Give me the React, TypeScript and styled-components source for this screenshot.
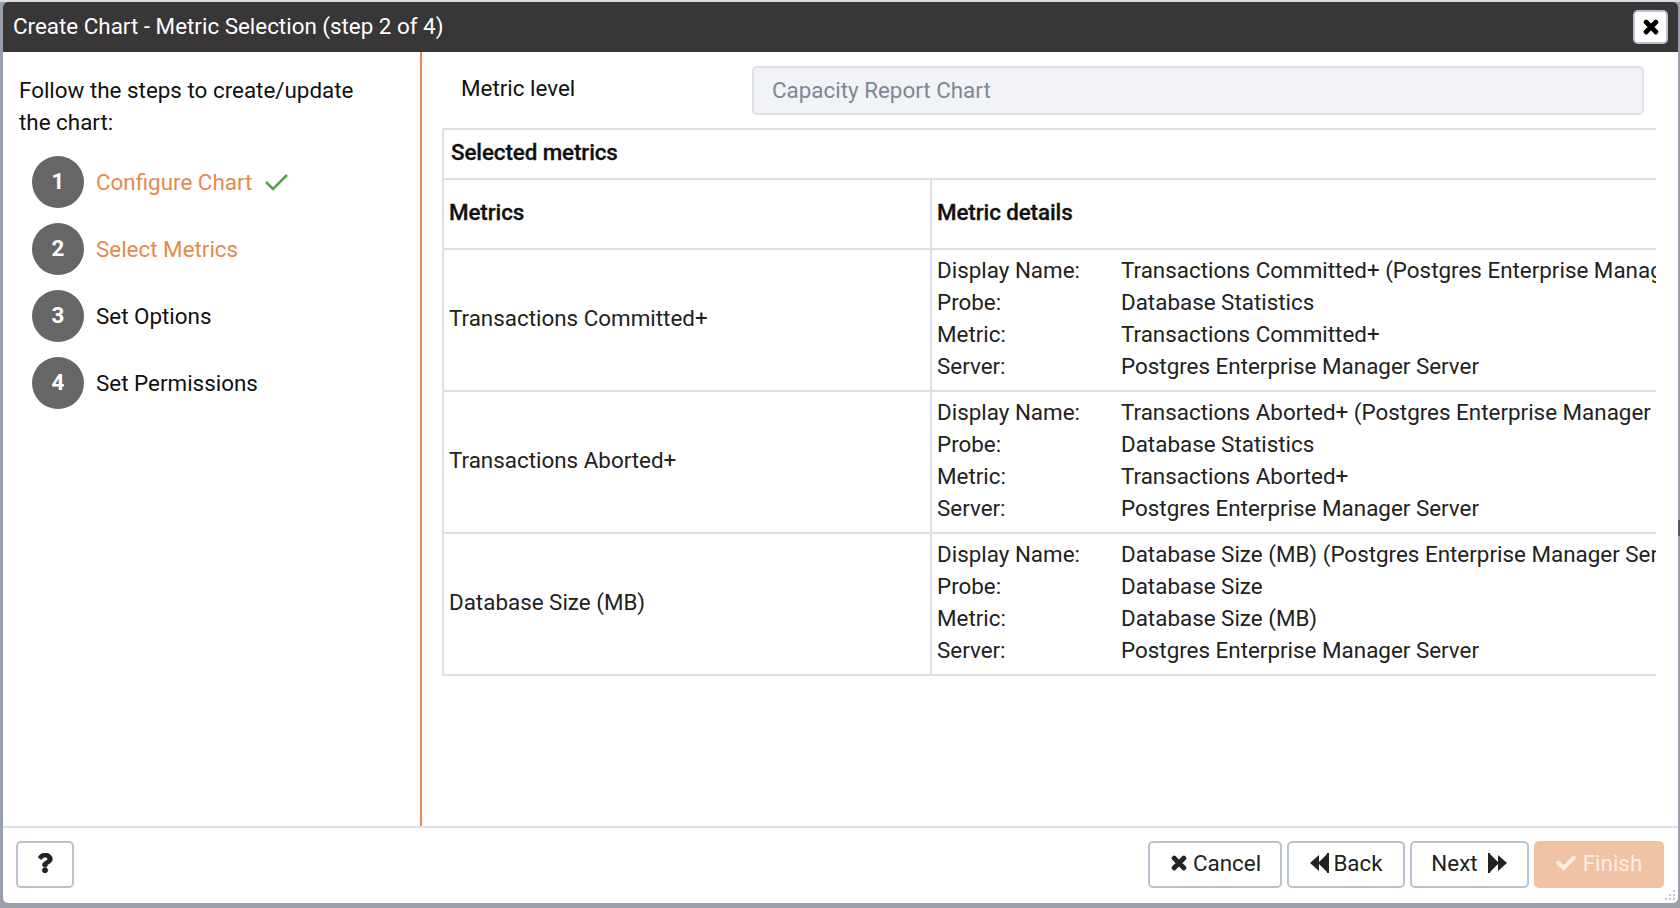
import React from "react";
import styled, { createGlobalStyle } from "styled-components";
import { FaTimes, FaCheck, FaQuestion } from "react-icons/fa";

const Orange = "#e58a4e";
const Line = "#dde0e6";
const BtnLine = "#bac1cf";
const Ink = "#222222";

const GlobalStyle = createGlobalStyle`
  html, body {
    margin: 0;
    height: 100%;
    overflow: hidden;
    background: #9a9fae;
  }
  body {
    font-family: Roboto, "Liberation Sans", sans-serif;
    font-size: 22.4px;
    line-height: 32px;
    color: ${Ink};
  }
`;

const Page = styled.div`
  position: relative;
  height: 908px;
  padding: 2px 2px 5px 3px;
  box-sizing: border-box;
  background: linear-gradient(#d9dbe0 0, #d9dbe0 2px, #9a9fae 2px);
`;

const EdgeMark = styled.div`
  position: absolute;
  top: 520px;
  right: 0;
  width: 2px;
  height: 16px;
  background: #555b66;
`;

const Dialog = styled.div`
  position: relative;
  height: 100%;
  display: flex;
  flex-direction: column;
  background: #fff;
  border-radius: 5px;
  overflow: hidden;
`;

const TitleBar = styled.div`
  height: 50px;
  flex: none;
  display: flex;
  align-items: center;
  justify-content: space-between;
  padding: 0 10px;
  background: #383637;
  color: #fff;
`;

const Title = styled.div`
  padding-bottom: 2px;
`;

const CloseButton = styled.button`
  width: 35px;
  height: 34px;
  padding: 0;
  display: flex;
  align-items: center;
  justify-content: center;
  background: #fff;
  border: 2px solid ${BtnLine};
  border-radius: 5px;
  color: #000;
  font-size: 20px;

  svg {
    stroke: currentColor;
    stroke-width: 30;
  }
`;

const Body = styled.div`
  flex: 1;
  min-height: 0;
  display: flex;
`;

const Sidebar = styled.div`
  width: 419px;
  flex: none;
  box-sizing: border-box;
  padding: 22px 16px 0 16px;
  border-right: 2px solid ${Orange};
  color: #111;
`;

const Intro = styled.div`
  width: 350px;
`;

const Steps = styled.ol`
  list-style: none;
  margin: 18px 0 0;
  padding: 0 0 0 13px;
  display: flex;
  flex-direction: column;
  gap: 15px;
`;

const Step = styled.li<{ $done: boolean }>`
  display: flex;
  align-items: center;
  gap: 12px;
  height: 52px;
  color: ${(p) => (p.$done ? Orange : "#111")};
`;

const Bullet = styled.span`
  width: 52px;
  height: 100%;
  flex: none;
  display: flex;
  align-items: center;
  justify-content: center;
  padding-bottom: 3px;
  box-sizing: border-box;
  border-radius: 50%;
  background: #666666;
  color: #fff;
  font-weight: 700;
`;

const DoneMark = styled.svg`
  width: 26px;
  height: 26px;
  fill: none;
  stroke: #55a255;
  stroke-width: 2.6;
`;

const Content = styled.div`
  flex: 1;
  min-width: 0;
  padding: 14px 20px 0 20px;
`;

const LevelRow = styled.div`
  display: flex;
  align-items: flex-start;
  height: 49px;
  padding-right: 14px;
  margin-bottom: 13px;
`;

const LevelLabel = styled.label`
  width: 310px;
  flex: none;
  padding: 6px 0 0 19px;
  box-sizing: border-box;
  color: #111;
`;

const LevelInput = styled.div`
  flex: 1;
  height: 49px;
  box-sizing: border-box;
  padding: 6px 18px;
  background: #f2f3f7;
  border: 2px solid ${Line};
  border-radius: 5px;
  color: #7f8796;
`;

const TableClip = styled.div`
  overflow: hidden;
  margin-right: 2px;
`;

const Table = styled.table`
  width: 1300px;
  table-layout: fixed;
  border-collapse: collapse;
  border: 2px solid ${Line};
  border-right: none;
`;

const MetricsCol = styled.col`
  width: 488px;
`;

const CaptionCell = styled.th`
  height: 50px;
  padding: 0 7px 4px;
  box-sizing: border-box;
  text-align: left;
  font-weight: 500;
  font-size: 22.4px;
  letter-spacing: -0.1px;
  color: #111;
  -webkit-text-stroke: 0.3px #111;
  border-bottom: 2px solid ${Line};
`;

const HeadCell = styled.th<{ $wide?: boolean }>`
  height: 70px;
  padding: 0 5px 5px;
  box-sizing: border-box;
  text-align: left;
  font-weight: 500;
  letter-spacing: -0.1px;
  color: #111;
  -webkit-text-stroke: 0.3px #111;
  border: 2px solid ${Line};
  border-top: none;
  border-right: ${(p) => (p.$wide ? "none" : `2px solid ${Line}`)};
`;

const MetricCell = styled.td`
  padding: 0 5px 4px;
  border: 2px solid ${Line};
`;

const DetailCell = styled.td`
  padding: 4px 5px 8px;
  border-top: 2px solid ${Line};
  border-bottom: 2px solid ${Line};
`;

const Details = styled.div`
  display: grid;
  grid-template-columns: 184px 1fr;
  white-space: nowrap;
`;

const Footer = styled.div`
  flex: none;
  height: 77px;
  box-sizing: border-box;
  display: flex;
  align-items: flex-start;
  justify-content: space-between;
  padding: 13px 14px 0 13px;
  border-top: 2px solid ${Line};
`;

const Actions = styled.div`
  display: flex;
  gap: 5px;
`;

const Button = styled.button<{ $width: number; $primary?: boolean; $gap?: number }>`
  width: ${(p) => p.$width}px;
  height: 47px;
  padding: 0 0 3px;
  display: flex;
  align-items: center;
  justify-content: center;
  gap: ${(p) => p.$gap ?? 5}px;
  box-sizing: border-box;
  font: inherit;
  border-radius: 5px;
  border: 2px solid ${(p) => (p.$primary ? "#f0c2a6" : BtnLine)};
  background: ${(p) => (p.$primary ? "#f0c2a6" : "#fff")};
  color: ${(p) => (p.$primary ? "#fbeee5" : Ink)};

  svg {
    font-size: 20px;
  }
`;

const HeavyTimes = styled(FaTimes)`
  stroke: currentColor;
  stroke-width: 30;
`;

const HeavyQuestion = styled(FaQuestion)`
  stroke: currentColor;
  stroke-width: 20;
`;

const SkipIcon = styled.svg<{ $flip?: boolean }>`
  width: 20px;
  height: 20px;
  flex: none;
  fill: currentColor;
  transform: ${(p) => (p.$flip ? "scaleX(-1)" : "none")};
`;

const Grip = styled.svg`
  position: absolute;
  right: 1px;
  bottom: 1px;
  width: 14px;
  height: 14px;
  fill: #c4c8d0;
`;

const steps = [
  { n: 1, label: "Configure Chart", done: true, check: true },
  { n: 2, label: "Select Metrics", done: true, check: false },
  { n: 3, label: "Set Options", done: false, check: false },
  { n: 4, label: "Set Permissions", done: false, check: false },
];

const rows = [
  {
    metric: "Transactions Committed+",
    display: "Transactions Committed+ (Postgres Enterprise Manager Server)",
    probe: "Database Statistics",
  },
  {
    metric: "Transactions Aborted+",
    display: "Transactions Aborted+ (Postgres Enterprise Manager Server)",
    probe: "Database Statistics",
  },
  {
    metric: "Database Size (MB)",
    display: "Database Size (MB) (Postgres Enterprise Manager Server)",
    probe: "Database Size",
  },
];

const Skip = ({ flip }: { flip?: boolean }) => (
  <SkipIcon viewBox="0 0 20 20" $flip={flip}>
    <path d="M0 0h2v1l9 9-9 9v1H0zM10 2l9 8-9 8z" />
  </SkipIcon>
);

const App = () => {
  return (
    <Page>
      <GlobalStyle />
      <EdgeMark />
      <Dialog>
        <TitleBar>
          <Title>Create Chart - Metric Selection (step 2 of 4)</Title>
          <CloseButton aria-label="Close">
            <FaTimes />
          </CloseButton>
        </TitleBar>
        <Body>
          <Sidebar>
            <Intro>Follow the steps to create/update the chart:</Intro>
            <Steps>
              {steps.map((s) => (
                <Step key={s.n} $done={s.done}>
                  <Bullet>{s.n}</Bullet>
                  {s.label}
                  {s.check && (
                    <DoneMark viewBox="0 0 26 26">
                      <path d="M2 13l7 7L23 6" />
                    </DoneMark>
                  )}
                </Step>
              ))}
            </Steps>
          </Sidebar>
          <Content>
            <LevelRow>
              <LevelLabel>Metric level</LevelLabel>
              <LevelInput>Capacity Report Chart</LevelInput>
            </LevelRow>
            <TableClip>
              <Table>
                <colgroup>
                  <MetricsCol />
                  <col />
                </colgroup>
                <thead>
                  <tr>
                    <CaptionCell colSpan={2}>Selected metrics</CaptionCell>
                  </tr>
                  <tr>
                    <HeadCell>Metrics</HeadCell>
                    <HeadCell $wide>Metric details</HeadCell>
                  </tr>
                </thead>
                <tbody>
                  {rows.map((r) => (
                    <tr key={r.metric}>
                      <MetricCell>{r.metric}</MetricCell>
                      <DetailCell>
                        <Details>
                          <span>Display Name:</span>
                          <span>{r.display}</span>
                          <span>Probe:</span>
                          <span>{r.probe}</span>
                          <span>Metric:</span>
                          <span>{r.metric}</span>
                          <span>Server:</span>
                          <span>Postgres Enterprise Manager Server</span>
                        </Details>
                      </DetailCell>
                    </tr>
                  ))}
                </tbody>
              </Table>
            </TableClip>
          </Content>
        </Body>
        <Footer>
          <Button $width={58} aria-label="Help">
            <HeavyQuestion />
          </Button>
          <Actions>
            <Button $width={134} $gap={4}>
              <HeavyTimes />
              Cancel
            </Button>
            <Button $width={118} $gap={4}>
              <Skip flip />
              Back
            </Button>
            <Button $width={119} $gap={10}>
              Next
              <Skip />
            </Button>
            <Button $width={130} $gap={7} $primary>
              <FaCheck />
              Finish
            </Button>
          </Actions>
        </Footer>
        <Grip viewBox="0 0 14 14">
          <rect x="10" y="2" width="2" height="2" />
          <rect x="6" y="6" width="2" height="2" />
          <rect x="10" y="6" width="2" height="2" />
          <rect x="2" y="10" width="2" height="2" />
          <rect x="6" y="10" width="2" height="2" />
          <rect x="10" y="10" width="2" height="2" />
        </Grip>
      </Dialog>
    </Page>
  );
};

export default App;
